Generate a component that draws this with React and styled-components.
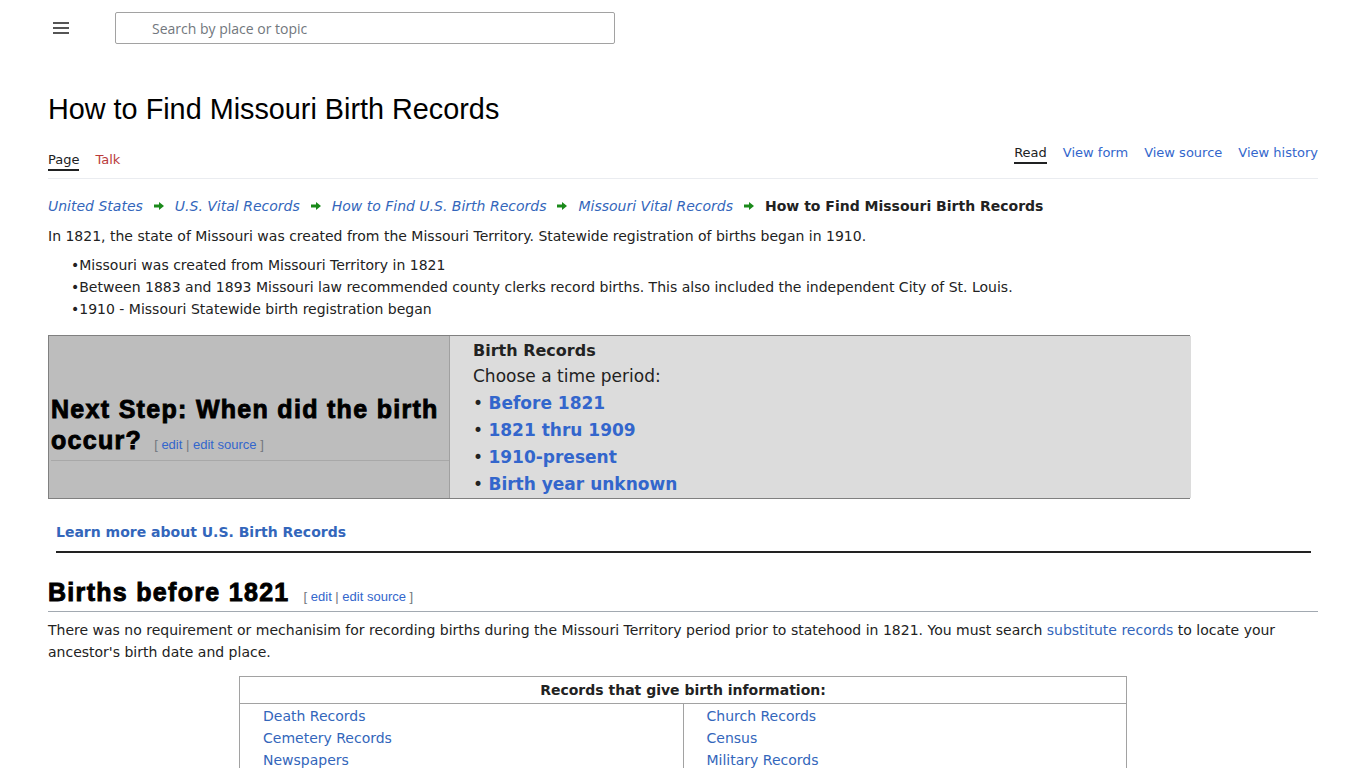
import React from "react";
import styled, { createGlobalStyle } from "styled-components";

const GlobalStyle = createGlobalStyle`
  html, body {
    margin: 0;
    padding: 0;
    background: #fff;
  }
  body {
    font-family: "DejaVu Sans", sans-serif;
    color: #222;
  }
  a {
    text-decoration: none;
    color: #3366bb;
  }
`;

const Page = styled.div`
  padding: 0 48px;
`;

const TopBar = styled.header`
  display: flex;
  align-items: center;
  height: 56px;
  gap: 46px;
`;

const Burger = styled.button`
  border: 0;
  background: none;
  padding: 0;
  margin-left: 5px;
  width: 16px;
  height: 14px;
  display: flex;
  flex-direction: column;
  justify-content: space-between;
  padding: 1px 0;
  span {
    display: block;
    height: 2px;
    background: #555;
  }
`;

const Search = styled.input`
  width: 500px;
  height: 32px;
  box-sizing: border-box;
  border: 1px solid #a2a2a2;
  border-radius: 2px;
  padding: 0 0 0 36px;
  font-family: "Open Sans", "DejaVu Sans", sans-serif;
  font-size: 14px;
  color: #222;
  &::placeholder {
    color: #72777d;
  }
`;

const Title = styled.h1`
  font-family: "Liberation Sans", Arial, sans-serif;
  font-weight: normal;
  font-size: 28.8px;
  color: #000;
  margin: 37px 0 0;
  line-height: 32px;
`;

const TabBar = styled.nav`
  display: flex;
  justify-content: space-between;
  align-items: flex-end;
  border-bottom: 1px solid #eaecf0;
  margin-top: 6px;
  height: 47px;
  font-size: 13px;
`;

const TabGroup = styled.div`
  display: flex;
  gap: ${p => p.$gap}px;
  margin-bottom: ${p => p.$bottom}px;
`;

const Tab = styled.a`
  color: ${p => (p.$active ? "#202122" : p.$red ? "#ba3b3b" : "#3366cc")};
  padding-bottom: 2px;
  border-bottom: 2px solid ${p => (p.$active ? "#202122" : "transparent")};
`;

const Crumbs = styled.div`
  display: flex;
  align-items: center;
  gap: 10px;
  margin-top: 17px;
  font-size: 14px;
  line-height: 20px;
  a {
    font-style: italic;
  }
  strong {
    color: #222;
  }
`;

const Arrow = () => (
  <svg width="12" height="10" viewBox="0 0 12 10">
    <path d="M1 3.5h5V1l5 4-5 4V6.5H1z" fill="#1a8a1a" />
  </svg>
);

const Para = styled.p`
  margin: ${p => p.$top || 0}px 0 0;
  font-size: 14px;
  line-height: 22px;
`;

const Bullets = styled.ul`
  list-style: none;
  margin: 7px 0 0;
  padding: 0 0 0 23px;
  font-size: 14px;
  line-height: 22px;
  li::before {
    content: "•";
  }
`;

const StepBox = styled.div`
  display: grid;
  grid-template-columns: 400px 742px;
  width: 1142px;
  margin-top: 15px;
  border: 1px solid #808080;
  box-sizing: border-box;
`;

const StepLeft = styled.div`
  background: #bdbdbd;
  display: flex;
  align-items: center;
`;

const HeavyHeading = styled.h2`
  font-family: "Liberation Sans", Arial, sans-serif;
  font-weight: 900;
  font-size: 25px;
  color: #000;
  -webkit-text-stroke: 0.9px #000;
  letter-spacing: 1.3px;
`;

const StepHeading = styled(HeavyHeading)`
  margin: 20px 0 0 2px;
  width: 100%;
  line-height: 31px;
  border-bottom: 1px solid #a8a8a8;
`;

const EditLinks = styled.span`
  font-family: "Liberation Sans", Arial, sans-serif;
  font-weight: normal;
  font-size: 13px;
  color: #72777d;
  margin-left: ${p => p.$gap || 10}px;
  -webkit-text-stroke: 0;
  letter-spacing: 0;
  white-space: nowrap;
  a {
    color: #3366cc;
  }
`;

const StepRight = styled.div`
  background: #dcdcdc;
  border-left: 1px solid #a0a0a0;
  padding: 2px 0 0 23px;
`;

const BoxTitle = styled.div`
  font-weight: bold;
  font-size: 16px;
  line-height: 25px;
  color: #222;
`;

const BoxLine = styled.div`
  font-size: 17px;
  line-height: 27px;
  color: #222;
  a {
    font-weight: bold;
    color: #3366cc;
  }
`;

const LearnMore = styled.div`
  margin: 22px 7px 0 8px;
  padding-bottom: 8px;
  border-bottom: 2px solid #222;
  font-size: 14px;
  line-height: 22px;
  a {
    font-weight: bold;
  }
`;

const SectionHead = styled(HeavyHeading)`
  margin: 25px 0 0;
  line-height: 28px;
  border-bottom: 1px solid #a2a9b1;
`;

const RecordTable = styled.table`
  margin: 13px auto 0;
  width: 888px;
  border-collapse: collapse;
  border: 1px solid #a2a2a2;
  font-size: 14px;
  th {
    font-weight: bold;
    line-height: 24px;
    border-bottom: 1px solid #a2a2a2;
    color: #222;
  }
  td {
    vertical-align: top;
    padding: 1px 23px;
    width: 50%;
  }
  td + td {
    border-left: 1px solid #a2a2a2;
  }
  a {
    display: block;
    line-height: 22px;
  }
`;

export default function App() {
  return (
    <>
      <GlobalStyle />
      <Page>
        <TopBar>
          <Burger aria-label="menu">
            <span />
            <span />
            <span />
          </Burger>
          <Search placeholder="Search by place or topic" />
        </TopBar>

        <Title>How to Find Missouri Birth Records</Title>

        <TabBar>
          <TabGroup $gap={16} $bottom={7}>
            <Tab $active>Page</Tab>
            <Tab $red>Talk</Tab>
          </TabGroup>
          <TabGroup $gap={16} $bottom={14}>
            <Tab $active>Read</Tab>
            <Tab>View form</Tab>
            <Tab>View source</Tab>
            <Tab>View history</Tab>
          </TabGroup>
        </TabBar>

        <Crumbs>
          <a href="#">United States</a>
          <Arrow />
          <a href="#">U.S. Vital Records</a>
          <Arrow />
          <a href="#">How to Find U.S. Birth Records</a>
          <Arrow />
          <a href="#">Missouri Vital Records</a>
          <Arrow />
          <strong>How to Find Missouri Birth Records</strong>
        </Crumbs>

        <Para $top={9}>
          In 1821, the state of Missouri was created from the Missouri Territory. Statewide registration of births began in 1910.
        </Para>

        <Bullets>
          <li>Missouri was created from Missouri Territory in 1821</li>
          <li>Between 1883 and 1893 Missouri law recommended county clerks record births. This also included the independent City of St. Louis.</li>
          <li>1910 - Missouri Statewide birth registration began</li>
        </Bullets>

        <StepBox>
          <StepLeft>
            <StepHeading>
              Next Step: When did the birth occur?
              <EditLinks $gap={12}>
                [ <a href="#">edit</a> | <a href="#">edit source</a> ]
              </EditLinks>
            </StepHeading>
          </StepLeft>
          <StepRight>
            <BoxTitle>Birth Records</BoxTitle>
            <BoxLine>Choose a time period:</BoxLine>
            <BoxLine>• <a href="#">Before 1821</a></BoxLine>
            <BoxLine>• <a href="#">1821 thru 1909</a></BoxLine>
            <BoxLine>• <a href="#">1910-present</a></BoxLine>
            <BoxLine>• <a href="#">Birth year unknown</a></BoxLine>
          </StepRight>
        </StepBox>

        <LearnMore>
          <a href="#">Learn more about U.S. Birth Records</a>
        </LearnMore>

        <SectionHead>
          Births before 1821
          <EditLinks $gap={14}>
            [ <a href="#">edit</a> | <a href="#">edit source</a> ]
          </EditLinks>
        </SectionHead>

        <Para $top={7}>
          There was no requirement or mechanisim for recording births during the Missouri Territory period prior to statehood in 1821. You must search{" "}
          <a href="#">substitute records</a> to locate your ancestor's birth date and place.
        </Para>

        <RecordTable>
          <thead>
            <tr>
              <th colSpan={2}>Records that give birth information:</th>
            </tr>
          </thead>
          <tbody>
            <tr>
              <td>
                <a href="#">Death Records</a>
                <a href="#">Cemetery Records</a>
                <a href="#">Newspapers</a>
              </td>
              <td>
                <a href="#">Church Records</a>
                <a href="#">Census</a>
                <a href="#">Military Records</a>
              </td>
            </tr>
          </tbody>
        </RecordTable>
      </Page>
    </>
  );
}
